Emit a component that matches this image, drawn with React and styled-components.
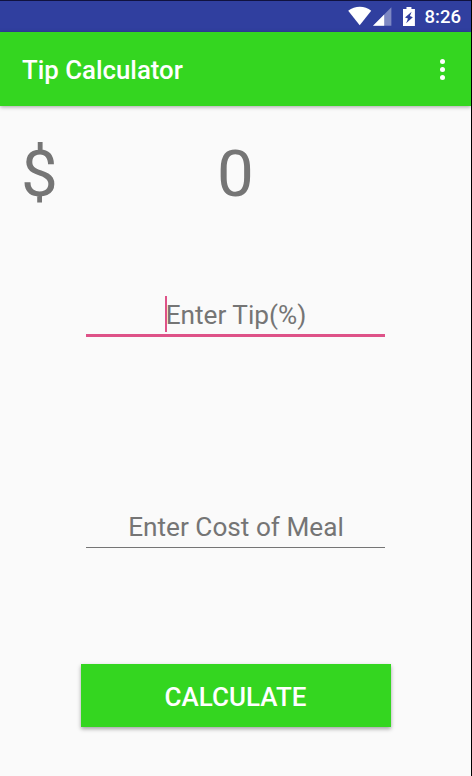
import React from 'react'
import styled, { createGlobalStyle } from "styled-components";

const App = () => {
    return (
      <>
        <GlobalStyle />
        <Screen>
          <StatusBar>
            <WifiIcon viewBox="0 0 24 20">
              <path d="M0.2 4.8C7 -0.7 17 -0.7 23.4 4.8L11.8 19.4Z" fill="#fff" />
            </WifiIcon>
            <SignalIcon viewBox="0 0 19 19">
              <path d="M0 18.7L18.5 0.2V18.7Z" fill="#fff" fillOpacity="0.38" />
              <path d="M0 18.7L11.3 7.4V18.7Z" fill="#fff" />
            </SignalIcon>
            <BatteryIcon viewBox="0 0 12 19">
              <path
                d="M3.5 0H8.5V2H12V19H0V2H3.5ZM8.7 4.6L2 10.4L5 11.6L3.2 16.4L9.9 10.2L7 8.9Z"
                fill="#fff"
                fillRule="evenodd"
              />
            </BatteryIcon>
            <Clock>8:26</Clock>
          </StatusBar>
          <Toolbar>
            <Title>Tip Calculator</Title>
            <MenuButton aria-label="More options">
              <Dot />
              <Dot />
              <Dot />
            </MenuButton>
          </Toolbar>
          <Content>
            <Total>
              <span>$</span>
              <Amount>0</Amount>
            </Total>
            <Field $active>
              <Input placeholder="Enter Tip(%)" />
              <Cursor />
            </Field>
            <Field>
              <Input placeholder="Enter Cost of Meal" />
            </Field>
            <Button>CALCULATE</Button>
          </Content>
        </Screen>
      </>
    );
}

const GlobalStyle = createGlobalStyle`
  * {
    box-sizing: border-box;
  }

  body {
    margin: 0;
    background: #fafafa;
    font-family: Roboto, sans-serif;
  }
`;
const Screen = styled.div`
  display: flex;
  flex-direction: column;
  width: 472px;
  height: 776px;
  overflow: hidden;
  background: #fafafa;
  border-right: 1px solid #000;
`;
const StatusBar = styled.div`
  display: flex;
  flex-shrink: 0;
  height: 32px;
  padding: 0 10px 0 348px;
  background: #303f9f;
  border-top: 1px solid #10123f;
`;
const WifiIcon = styled.svg`
  width: 24px;
  height: 20px;
  margin-top: 5px;
`;
const SignalIcon = styled.svg`
  width: 19px;
  height: 19px;
  margin: 6px 0 0 1px;
`;
const BatteryIcon = styled.svg`
  width: 12px;
  height: 19px;
  margin: 6px 0 0 11px;
`;
const Clock = styled.span`
  margin-left: 10px;
  color: #fff;
  font-size: 18.5px;
  font-weight: 500;
  line-height: 33px;
`;
const Toolbar = styled.header`
  display: flex;
  flex-shrink: 0;
  align-items: center;
  justify-content: space-between;
  height: 74px;
  padding: 0 21px 0 22px;
  background: #34d620;
  box-shadow: 0 1px 4px rgba(0, 0, 0, 0.35);
`;
const Title = styled.h1`
  margin: 0;
  padding-top: 2px;
  color: #fff;
  font-size: 25.8px;
  font-weight: 500;
  line-height: 72px;
`;
const MenuButton = styled.button`
  display: flex;
  flex-direction: column;
  align-items: center;
  gap: 3px;
  width: 15px;
  padding: 0;
  border: none;
  background: none;
`;
const Dot = styled.span`
  width: 5px;
  height: 5px;
  border-radius: 50%;
  background: #fff;
`;
const Content = styled.main`
  display: flex;
  flex-direction: column;
  align-items: center;
`;
const Total = styled.div`
  display: grid;
  grid-template-columns: 60px 1fr 60px;
  width: 100%;
  height: 78px;
  margin-top: 29px;
  padding: 0 21px;
  color: #757575;
  font-size: 65.5px;
  line-height: 78px;
`;
const Amount = styled.span`
  text-align: center;
`;
const Field = styled.div`
  position: relative;
  width: 299px;
  height: ${(props) => (props.$active ? "53px" : "52px")};
  margin-top: ${(props) => (props.$active ? "71px" : "159px")};
  border-bottom: ${(props) => (props.$active ? "3px solid #de5288" : "1px solid #757575")};
`;
const Input = styled.input`
  display: block;
  width: 100%;
  height: 36px;
  margin-top: 12px;
  padding: 2px 0 0 1px;
  border: none;
  outline: none;
  background: transparent;
  color: #212121;
  font-family: inherit;
  font-size: 26.2px;
  text-align: center;

  &::placeholder {
    color: #757575;
    opacity: 1;
  }
`;
/* text cursor of the focused field */
const Cursor = styled.span`
  position: absolute;
  top: 12px;
  left: 79px;
  width: 2px;
  height: 36px;
  background: #de5288;
`;
const Button = styled.button`
  width: 310px;
  height: 63px;
  margin-top: 116px;
  padding: 2px 0 0;
  border: none;
  background: #34d620;
  box-shadow: 0 2px 4px rgba(0, 0, 0, 0.35);
  color: #fff;
  font-family: inherit;
  font-size: 26px;
  font-weight: 500;
`;

export default App
